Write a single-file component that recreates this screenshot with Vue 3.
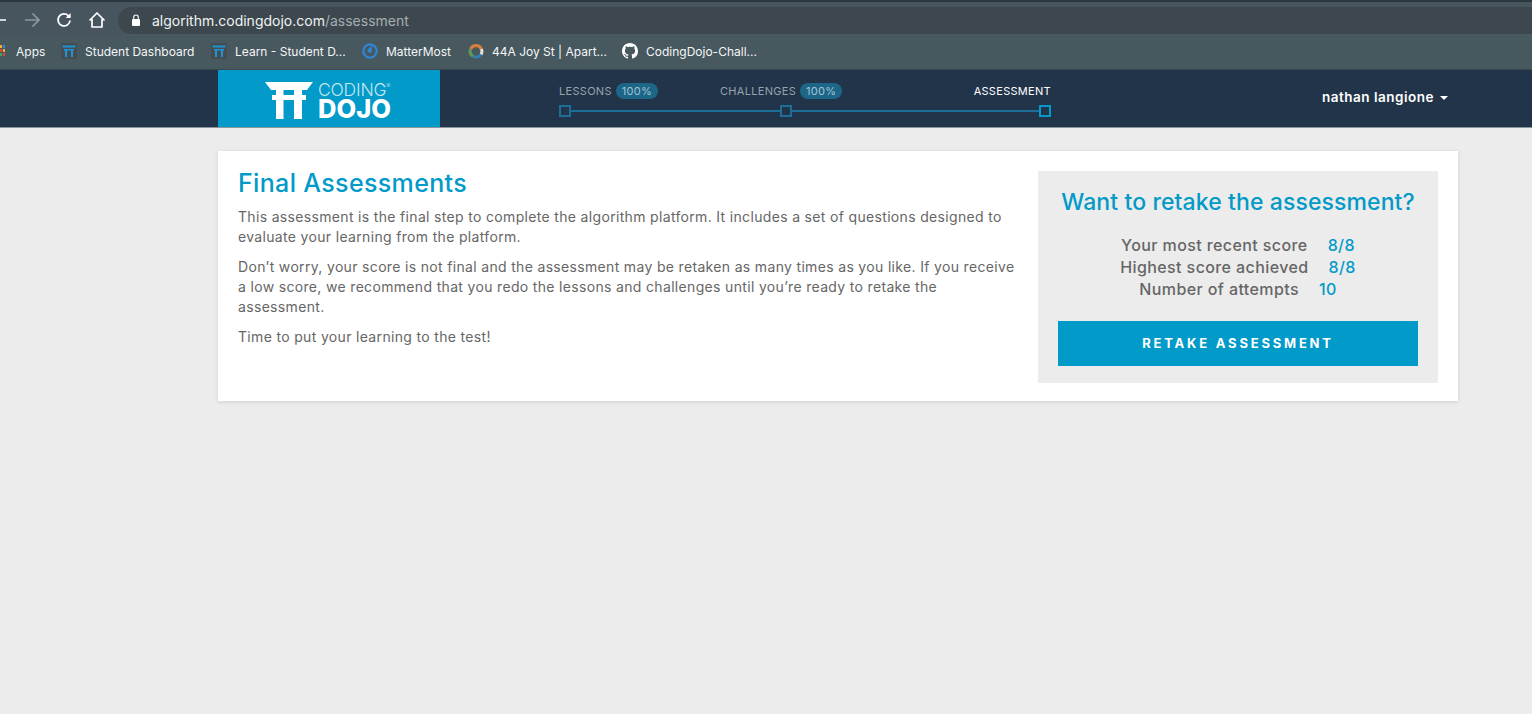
<template>
  <div class="page">
    <div class="tab-strip"></div>
    <div class="toolbar">
      <svg class="tool-icon back" viewBox="0 0 18 18" fill="none" stroke="#fff" stroke-width="1.7">
        <path d="M16 9H2M8.5 2.5L2 9l6.5 6.5" />
      </svg>
      <svg class="tool-icon" viewBox="0 0 18 18" fill="none" stroke="#8f989d" stroke-width="1.7">
        <path d="M2 9h14M9.5 2.5L16 9l-6.5 6.5" />
      </svg>
      <svg class="tool-icon" viewBox="0 0 18 18" fill="none" stroke="#fff" stroke-width="1.8">
        <path d="M15 9.5A6 6 0 1 1 13.2 4.6L15 6.2" />
        <path d="M15.6 2v5h-5" fill="#fff" stroke="none" />
      </svg>
      <svg class="tool-icon" viewBox="0 0 18 18" fill="none" stroke="#fff" stroke-width="1.7">
        <path d="M1.5 9.5L9 2l7.5 7.5M4 8v8h10V8" stroke-linejoin="round" />
      </svg>
      <div class="address">
        <svg class="lock" viewBox="0 0 10 12" fill="#fff">
          <rect x="1" y="5" width="8" height="7" rx="1" />
          <path d="M2.7 5V3.3a2.3 2.3 0 0 1 4.6 0V5" fill="none" stroke="#fff" stroke-width="1.1" />
        </svg>
        <span class="host">algorithm.codingdojo.com</span><span class="path">/assessment</span>
      </div>
    </div>
    <div class="bookmarks">
      <div class="bookmark apps">
        <span class="apps-grid">
          <i v-for="(c, i) in appColors" :key="i" :style="{ background: c }"></i>
        </span>
        <span>Apps</span>
      </div>
      <div v-for="b in bookmarks" :key="b.label" class="bookmark" :style="{ width: b.width + 'px' }">
        <span v-if="b.icon === 'torii'" class="fav-torii">
          <svg viewBox="0 0 16 16" fill="#1f94d2">
            <path d="M1 2.5h14l-1 2H2zM3 6h10v1.6H3zM4 7h2v7H4zM10 7h2v7h-2z" />
          </svg>
        </span>
        <svg v-else-if="b.icon === 'mm'" class="fav" viewBox="0 0 16 16">
          <circle cx="8" cy="8" r="6.6" fill="none" stroke="#2f86d8" stroke-width="2.2" />
          <path d="M9.8 2.5L10 7.6A2.2 2.2 0 1 1 6.3 6z" fill="#2f86d8" />
        </svg>
        <svg v-else-if="b.icon === 'ring'" class="fav" viewBox="0 0 16 16" fill="none" stroke-width="3">
          <path d="M2.6 6A6 6 0 0 1 13.4 6" stroke="#d9803a" />
          <path d="M13.4 6A6 6 0 0 1 13 11.5" stroke="#e7e2d4" />
          <path d="M13 11.5A6 6 0 0 1 5 13.2" stroke="#2f7fb8" />
          <path d="M5 13.2A6 6 0 0 1 2.6 6" stroke="#5c9a55" />
        </svg>
        <svg v-else class="fav" viewBox="0 0 16 16" fill="#fff">
          <path d="M8 0C3.58 0 0 3.58 0 8c0 3.54 2.29 6.53 5.47 7.59.4.07.55-.17.55-.38 0-.19-.01-.82-.01-1.49-2.01.37-2.53-.49-2.69-.94-.09-.23-.48-.94-.82-1.13-.28-.15-.68-.52-.01-.53.63-.01 1.08.58 1.23.82.72 1.21 1.87.87 2.33.66.07-.52.28-.87.51-1.07-1.78-.2-3.64-.89-3.64-3.95 0-.87.31-1.59.82-2.15-.08-.2-.36-1.02.08-2.12 0 0 .67-.21 2.2.82.64-.18 1.32-.27 2-.27s1.36.09 2 .27c1.53-1.04 2.2-.82 2.2-.82.44 1.1.16 1.92.08 2.12.51.56.82 1.27.82 2.15 0 3.07-1.87 3.75-3.65 3.95.29.25.54.73.54 1.48 0 1.07-.01 1.93-.01 2.2 0 .21.15.46.55.38A8.01 8.01 0 0 0 16 8c0-4.42-3.58-8-8-8z" />
        </svg>
        <span>{{ b.label }}</span>
      </div>
    </div>

    <header class="navbar">
      <div class="logo">
        <svg class="logo-mark" viewBox="0 0 48 38" fill="#fff">
          <path d="M0 0H48L42 8H37V13H41V18H37V37H29V18H18.5V37H11V18H7V13H11V8H6ZM18.5 8V13H29V8Z" fill-rule="evenodd" />
        </svg>
        <div class="logo-text">
          <span class="logo-top">CODING<sup>®</sup></span>
          <span class="logo-bottom">DOJO</span>
        </div>
      </div>
      <div class="stepper">
        <div class="step-labels">
          <div class="step-label lessons">LESSONS <span class="pill">100%</span></div>
          <div class="step-label challenges">CHALLENGES <span class="pill">100%</span></div>
          <div class="step-label current">ASSESSMENT</div>
        </div>
        <div class="track">
          <span class="node"></span>
          <span class="line first"></span>
          <span class="node"></span>
          <span class="line"></span>
          <span class="node active"></span>
        </div>
      </div>
      <div class="user">nathan langione <span class="caret"></span></div>
    </header>

    <main class="content">
      <section class="card">
        <div class="intro">
          <h1>Final Assessments</h1>
          <p>This assessment is the final step to complete the algorithm platform. It includes a set of questions designed to evaluate your learning from the platform.</p>
          <p>Don’t worry, your score is not final and the assessment may be retaken as many times as you like. If you receive a low score, we recommend that you redo the lessons and challenges until you’re ready to retake the assessment.</p>
          <p>Time to put your learning to the test!</p>
        </div>
        <aside class="retake">
          <h2>Want to retake the assessment?</h2>
          <div class="scores">
            <div v-for="s in scores" :key="s.label" class="score-row">
              <span class="score-label">{{ s.label }}</span>
              <span class="score-value">{{ s.value }}</span>
            </div>
          </div>
          <button class="retake-btn">RETAKE ASSESSMENT</button>
        </aside>
      </section>
    </main>
  </div>
</template>

<script setup>
const appColors = ['#d9483b', '#f0b429', '#3b82d6', '#3fa45b', '#d9483b', '#f0b429', '#f0b429', '#3fa45b', '#d9483b']

const bookmarks = [
  { label: 'Student Dashboard', icon: 'torii', width: 150 },
  { label: 'Learn - Student D...', icon: 'torii', width: 151 },
  { label: 'MatterMost', icon: 'mm', width: 106 },
  { label: '44A Joy St | Apart...', icon: 'ring', width: 154 },
  { label: 'CodingDojo-Chall...', icon: 'gh', width: 150 }
]

const scores = [
  { label: 'Your most recent score', value: '8/8' },
  { label: 'Highest score achieved', value: '8/8' },
  { label: 'Number of attempts', value: '10' }
]
</script>

<style>
html,
body {
  margin: 0;
  background: #ececec;
}
</style>

<style scoped>
.page {
  min-height: 714px;
  background: #ececec;
  font-family: Inter, "Liberation Sans", sans-serif;
  overflow: hidden;
}

.tab-strip {
  height: 2px;
  background: #2c373d;
}

.toolbar {
  height: 32px;
  box-sizing: border-box;
  padding-top: 4px;
  background: #47565e;
  display: flex;
  align-items: center;
  gap: 14.5px;
  color: #fff;
}

.tool-icon {
  width: 18px;
  height: 18px;
  flex: none;
}

.back {
  margin-left: -10px;
}

.address {
  margin-left: -2px;
  flex: 1;
  height: 27px;
  background: #3c484e;
  border-radius: 14px 0 0 14px;
  display: flex;
  align-items: center;
  padding-left: 13px;
  font-size: 14px;
}

.lock {
  width: 10px;
  height: 12px;
  margin-right: 11px;
}

.host {
  color: #f1f3f3;
}

.path {
  color: #a5adb1;
}

.bookmarks {
  height: 36px;
  box-sizing: border-box;
  padding-bottom: 1px;
  background: #47585f;
  border-bottom: 1px solid #3a4950;
  display: flex;
  align-items: center;
  font-size: 12px;
  color: #f4f6f6;
}

.bookmark {
  display: flex;
  align-items: center;
  gap: 8px;
  flex: none;
}

.apps {
  width: 64px;
  margin-left: -3px;
  gap: 10px;
}

.apps-grid {
  width: 9px;
  height: 13px;
  display: grid;
  grid-template-columns: repeat(3, 3px);
  grid-auto-rows: 4px;
}

.apps-grid i {
  display: block;
  width: 2px;
  height: 3px;
}

.fav-torii {
  width: 16px;
  height: 16px;
  background: #454d52;
  display: block;
  flex: none;
}

.fav-torii svg,
.fav {
  display: block;
  width: 16px;
  height: 16px;
  flex: none;
}

.navbar {
  height: 58px;
  box-sizing: border-box;
  background: #22344a;
  border-bottom: 1px solid #8a959c;
  display: flex;
  padding-left: 218px;
}

.logo {
  width: 222px;
  background: #029ac8;
  display: flex;
  align-items: center;
  gap: 5px;
  padding: 4px 0 0 47px;
  box-sizing: border-box;
}

.logo-mark {
  width: 48px;
  height: 38px;
}

.logo-text {
  display: flex;
  flex-direction: column;
  color: #fff;
}

.logo-top {
  font-size: 17.5px;
  font-weight: 300;
  color: #c4e7f2;
  line-height: 17px;
  letter-spacing: -0.2px;
  white-space: nowrap;
}

.logo-top sup {
  font-size: 6px;
  vertical-align: top;
  line-height: 10px;
}

.logo-bottom {
  font-size: 25.5px;
  font-weight: 800;
  line-height: 22px;
}

.stepper {
  width: 492px;
  margin-left: 119px;
  padding-top: 13px;
}

.step-labels {
  display: flex;
  height: 16px;
  font-size: 11px;
  line-height: 16px;
  letter-spacing: 0.3px;
  color: #98a3ad;
}

.step-label {
  flex: none;
  white-space: nowrap;
}

.lessons {
  width: 161px;
}

.challenges {
  flex: 1;
}

.current {
  color: #fff;
}

.pill {
  display: inline-block;
  margin-left: 1px;
  background: #1d6688;
  color: #a3c3d3;
  border-radius: 8px;
  padding: 0 5.5px;
  height: 16px;
  line-height: 16px;
  font-size: 11px;
}

.track {
  display: flex;
  align-items: center;
  margin-top: 6px;
}

.node {
  width: 12px;
  height: 12px;
  box-sizing: border-box;
  border: 2px solid #1d6f97;
  flex: none;
}

.node.active {
  border-color: #029ac8;
}

.line {
  flex: 1;
  height: 2px;
  background: #1d6f97;
}

.line.first {
  flex: none;
  width: 209px;
}

.user {
  margin-left: 271px;
  margin-top: 18px;
  font-size: 13.5px;
  letter-spacing: 0.5px;
  font-weight: 600;
  color: #fff;
  line-height: 18px;
  white-space: nowrap;
}

.caret {
  display: inline-block;
  margin-left: 2px;
  vertical-align: middle;
  border-top: 4px solid #fff;
  border-left: 4px solid transparent;
  border-right: 4px solid transparent;
}

.content {
  padding: 23px 74px 0 218px;
}

.card {
  background: #fff;
  box-shadow: 0 1px 4px rgba(0, 0, 0, 0.12);
  padding: 20px;
  display: flex;
  justify-content: space-between;
  align-items: flex-start;
  height: 250px;
  box-sizing: border-box;
}

.intro {
  width: 782px;
}

h1 {
  margin: 0 0 12px;
  font-size: 25px;
  line-height: 24px;
  letter-spacing: 0.35px;
  font-weight: 500;
  color: #029ac8;
}

.intro p {
  margin: 0 0 10px;
  font-size: 14px;
  letter-spacing: 0.33px;
  line-height: 20px;
  color: #666;
}

.retake {
  width: 400px;
  height: 212px;
  background: #ececec;
  box-sizing: border-box;
  padding: 18px 20px 0;
  text-align: center;
}

h2 {
  margin: 0 0 19px;
  font-size: 23px;
  letter-spacing: 0.1px;
  line-height: 26px;
  font-weight: 500;
  color: #029ac8;
  white-space: nowrap;
}

.scores {
  font-size: 16px;
  letter-spacing: 0.4px;
  line-height: 22px;
  font-weight: 500;
}

.score-row {
  display: flex;
  justify-content: center;
  gap: 20px;
}

.score-label {
  color: #666;
}

.score-value {
  color: #029ac8;
}

.retake-btn {
  display: block;
  width: 100%;
  height: 45px;
  margin-top: 21px;
  padding: 0 0 2px;
  background: #029ac8;
  border: none;
  color: #fff;
  font-family: inherit;
  font-size: 13px;
  font-weight: 700;
  letter-spacing: 2.8px;
}
</style>
